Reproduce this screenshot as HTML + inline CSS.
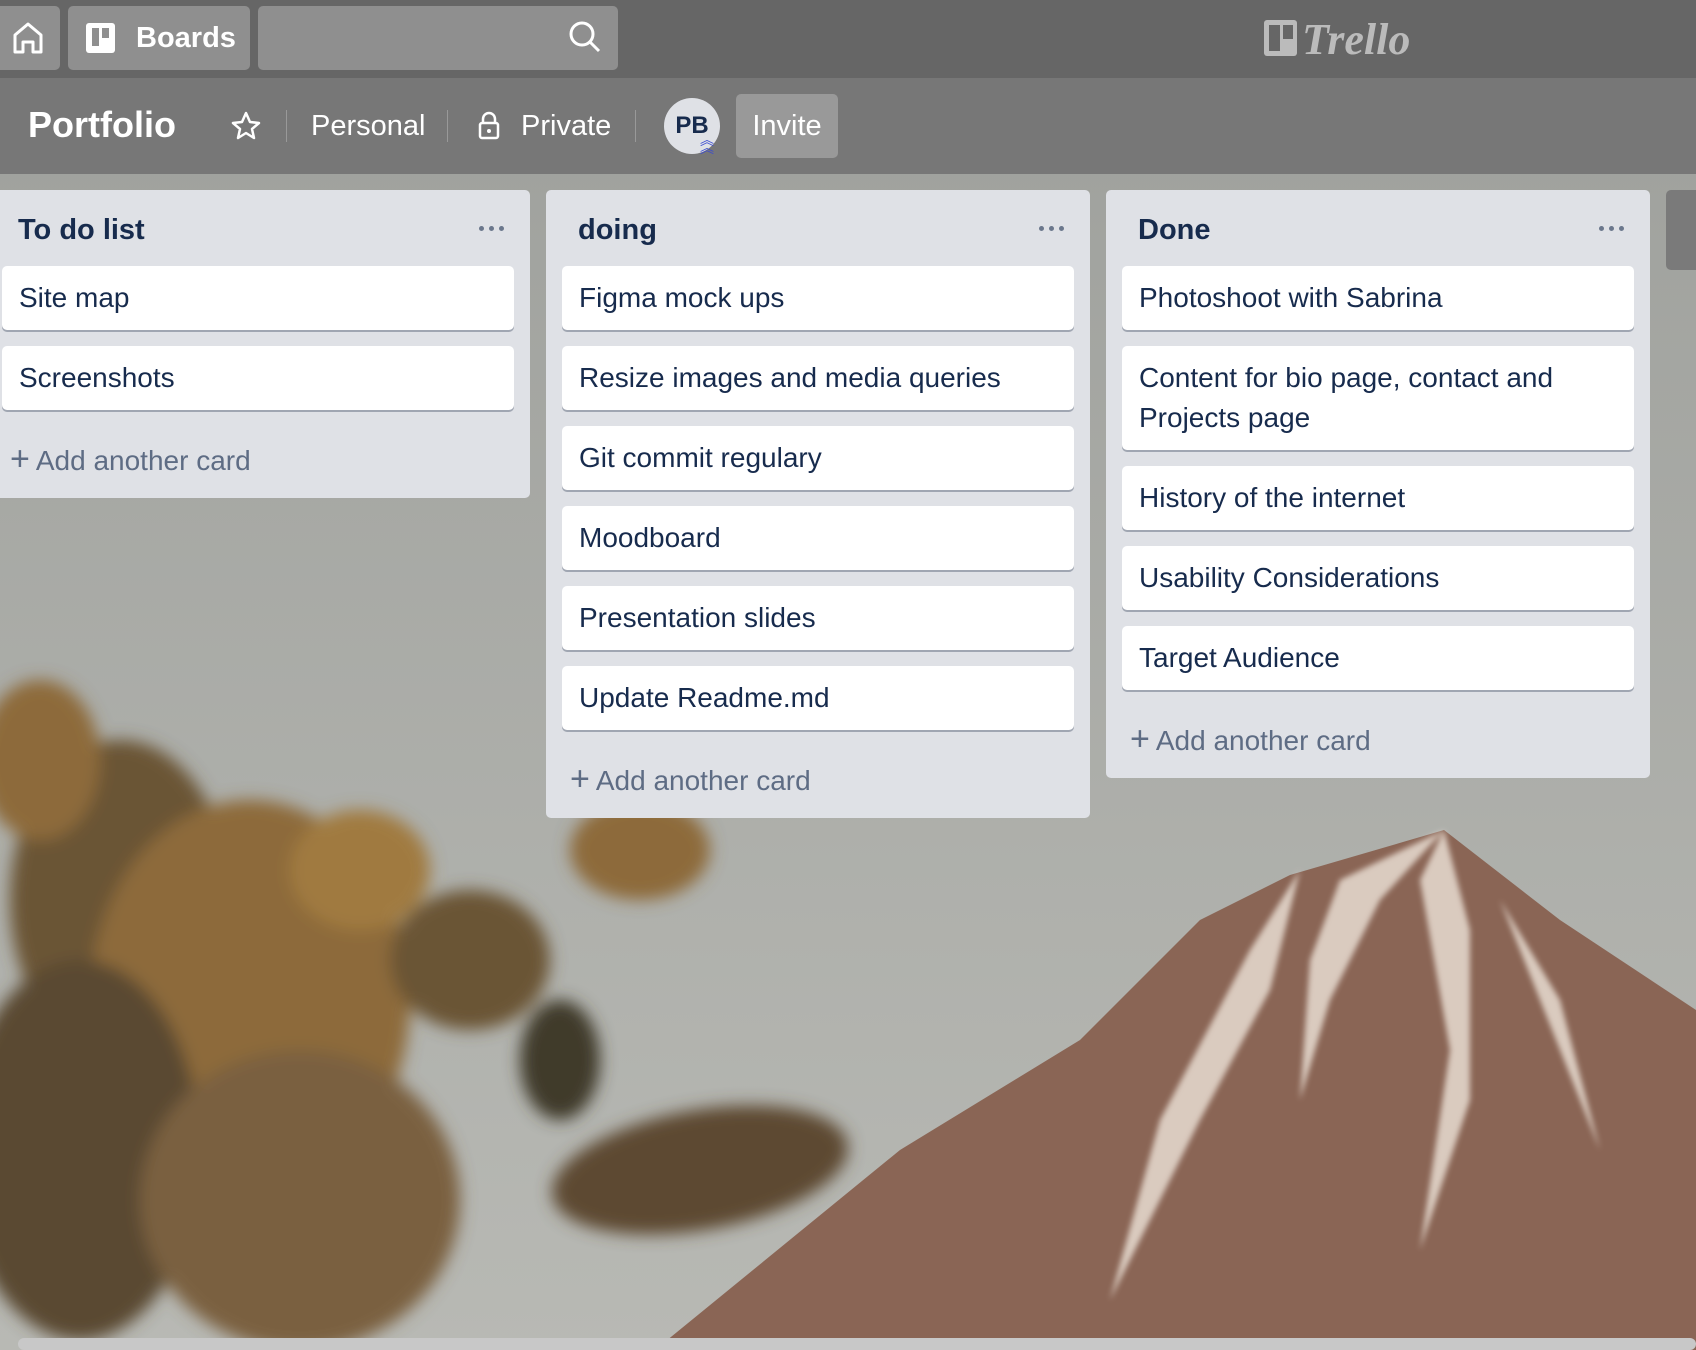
<!DOCTYPE html>
<html><head><meta charset="utf-8"><style>
*{box-sizing:border-box;margin:0;padding:0}
body{width:1696px;height:1350px;overflow:hidden;position:relative;font-family:"Liberation Sans",sans-serif;background:#a7a9a4}
#bg{position:absolute;left:0;top:0}
.top{position:absolute;left:0;top:0;width:1696px;height:78px;background:#666}
.btn{position:absolute;top:6px;height:64px;background:#8f8f8f;border-radius:5px;color:#fff}
.bh{position:absolute;left:0;top:78px;width:1696px;height:96px;background:#777}
.list{position:absolute;top:190px;width:544px;background:#dfe1e6;border-radius:5px}
.lh{position:absolute;left:32px;top:24px;font-size:29px;font-weight:bold;color:#172b4d}
.dots{position:absolute;right:26px;top:36px;display:flex;gap:5px}
.dots i{width:5px;height:5px;border-radius:50%;background:#6b778c}
.card{position:absolute;left:16px;width:512px;background:#fff;border-radius:5px;box-shadow:0 2px 0 #a0a6b2;font-size:28px;color:#172b4d;padding:16px 17px;line-height:40px}
.card.s{height:64px;padding-top:12px}
.add{position:absolute;left:24px;font-size:28px;color:#5e6c84}
.add b{font-weight:normal;font-size:34px;margin-right:6px}
.sep{position:absolute;top:110px;width:1px;height:32px;background:#999}
.ht{position:absolute;color:#fff;font-size:29px;top:110px}
</style></head><body>
<svg id="bg" width="1696" height="1350">
<defs><filter id="b"><feGaussianBlur stdDeviation="8"/></filter><filter id="b2"><feGaussianBlur stdDeviation="3"/></filter>
<linearGradient id="sky" x1="0" y1="0" x2="0" y2="1"><stop offset="0" stop-color="#9d9f9b"/><stop offset="1" stop-color="#b8b9b4"/></linearGradient></defs>
<rect width="1696" height="1350" fill="url(#sky)"/>
<polygon points="655,1350 900,1150 1080,1040 1200,920 1290,875 1444,830 1560,920 1696,1010 1696,1350" fill="#8a6555"/>
<g fill="#e8ddd2" opacity=".85" filter="url(#b2)">
<polygon points="1444,830 1340,880 1310,960 1300,1100 1330,1000 1380,900"/>
<polygon points="1444,830 1420,880 1450,1050 1420,1250 1470,1100 1470,930"/>
<polygon points="1300,870 1250,950 1160,1120 1110,1300 1200,1120 1270,990"/>
<polygon points="1500,900 1540,1000 1600,1150 1560,1000"/>
</g>
<g filter="url(#b)">
<ellipse cx="120" cy="900" rx="110" ry="160" fill="#6b5434"/>
<ellipse cx="250" cy="1000" rx="160" ry="200" fill="#8d6a3a"/>
<ellipse cx="80" cy="1150" rx="120" ry="190" fill="#5a4a33"/>
<ellipse cx="360" cy="870" rx="70" ry="60" fill="#a07a40"/>
<ellipse cx="470" cy="960" rx="80" ry="70" fill="#6a5534"/>
<ellipse cx="300" cy="1200" rx="160" ry="150" fill="#7a6040"/>
<ellipse cx="700" cy="1170" rx="150" ry="60" fill="#5d4a30" transform="rotate(-10 700 1170)"/>
<ellipse cx="640" cy="850" rx="70" ry="50" fill="#8d6a3a"/>
<ellipse cx="40" cy="760" rx="60" ry="80" fill="#8d6a3a"/>
<ellipse cx="560" cy="1060" rx="40" ry="60" fill="#3f3a2c"/>
</g>
<rect x="18" y="1338" width="1678" height="12" rx="6" fill="#c8c8c8"/>
</svg>
<div class="top"></div>
<div class="btn" style="left:-6px;width:66px"><svg width="60" height="64" style="position:absolute;left:6px"><path d="M15 46V29L28 18 41 29V46H33V36H23V46Z" fill="none" stroke="#fff" stroke-width="3" stroke-linejoin="round"/></svg></div>
<div class="btn" style="left:68px;width:182px"><svg width="40" height="64" style="position:absolute;left:15px"><rect x="3" y="17" width="29" height="30" rx="3" fill="#fff"/><rect x="9" y="22" width="7" height="18" fill="#8f8f8f"/><rect x="19" y="22" width="7" height="10" fill="#8f8f8f"/></svg><span style="position:absolute;left:68px;top:16px;font-size:29px;font-weight:bold">Boards</span></div>
<div class="btn" style="left:258px;width:360px"><svg width="40" height="40" style="position:absolute;left:308px;top:12px"><circle cx="16" cy="16" r="11" fill="none" stroke="#fff" stroke-width="3"/><path d="M24 24L33 33" stroke="#fff" stroke-width="3"/></svg></div>
<svg width="150" height="50" style="position:absolute;left:1262px;top:16px"><rect x="2" y="4" width="33" height="36" rx="3" fill="#bbb"/><rect x="7" y="9" width="11" height="26" fill="#666"/><rect x="21" y="9" width="10" height="14" fill="#666"/><text x="40" y="38" font-family="Liberation Serif" font-style="italic" font-weight="bold" font-size="44" fill="#bbb">Trello</text></svg>
<div class="bh"></div>
<div class="ht" style="left:28px;top:104px;font-size:36px;font-weight:bold">Portfolio</div>
<svg width="32" height="32" style="position:absolute;left:230px;top:110px"><path d="M16 3l4 9 9 1-7 6 2 9-8-5-8 5 2-9-7-6 9-1z" fill="none" stroke="#fff" stroke-width="2.5" stroke-linejoin="round"/></svg>
<div class="sep" style="left:286px"></div>
<div class="ht" style="left:311px">Personal</div>
<div class="sep" style="left:447px"></div>
<svg width="26" height="32" style="position:absolute;left:476px;top:110px"><path d="M7 13V9a6 6 0 0 1 12 0v4" fill="none" stroke="#fff" stroke-width="2.5"/><rect x="4" y="13" width="18" height="15" rx="2" fill="none" stroke="#fff" stroke-width="2.5"/><circle cx="13" cy="21" r="2" fill="#fff"/></svg>
<div class="ht" style="left:521px">Private</div>
<div class="sep" style="left:635px"></div>
<div style="position:absolute;left:664px;top:98px;width:56px;height:56px;border-radius:50%;background:#dfe1e6;color:#172b4d;font-weight:bold;font-size:24px;text-align:center;line-height:56px">PB</div>
<div style="position:absolute;left:700px;top:136px;color:#3b4bd0;font-size:14px;line-height:8px">︽<br>︽</div>
<div style="position:absolute;left:736px;top:94px;width:102px;height:64px;background:#999;border-radius:5px;color:#fff;font-size:29px;text-align:center;line-height:64px">Invite</div>
<div style="position:absolute;left:1666px;top:190px;width:40px;height:80px;background:#7a7a7a;border-radius:5px"></div>

<div class="list" style="left:-14px;height:308px">
<div class="lh">To do list</div><div class="dots"><i></i><i></i><i></i></div>
<div class="card s" style="top:76px">Site map</div>
<div class="card s" style="top:156px">Screenshots</div>
<div class="add" style="top:250px"><b>+</b>Add another card</div>
</div>
<div class="list" style="left:546px;height:628px">
<div class="lh">doing</div><div class="dots"><i></i><i></i><i></i></div>
<div class="card s" style="top:76px">Figma mock ups</div>
<div class="card s" style="top:156px">Resize images and media queries</div>
<div class="card s" style="top:236px">Git commit regulary</div>
<div class="card s" style="top:316px">Moodboard</div>
<div class="card s" style="top:396px">Presentation slides</div>
<div class="card s" style="top:476px">Update Readme.md</div>
<div class="add" style="top:570px"><b>+</b>Add another card</div>
</div>
<div class="list" style="left:1106px;height:588px">
<div class="lh">Done</div><div class="dots"><i></i><i></i><i></i></div>
<div class="card s" style="top:76px">Photoshoot with Sabrina</div>
<div class="card" style="top:156px;height:104px;padding-top:12px">Content for bio page, contact and Projects page</div>
<div class="card s" style="top:276px">History of the internet</div>
<div class="card s" style="top:356px">Usability Considerations</div>
<div class="card s" style="top:436px">Target Audience</div>
<div class="add" style="top:530px"><b>+</b>Add another card</div>
</div>
</body></html>
